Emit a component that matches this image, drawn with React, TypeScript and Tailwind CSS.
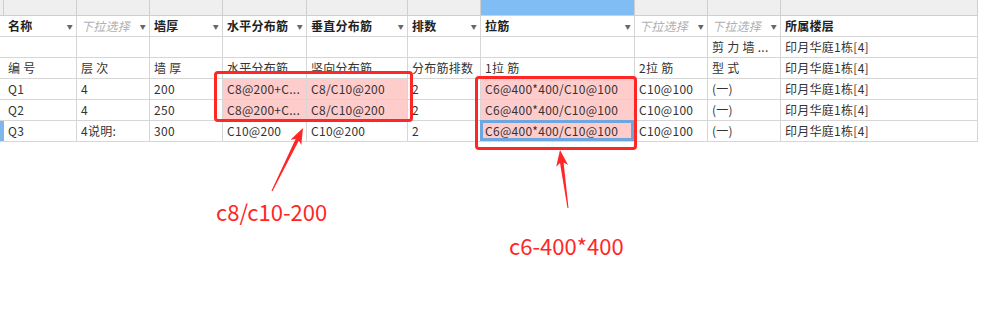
import React from "react";

const cols = "grid-cols-[4px_73px_73px_73px_84px_101px_73px_154px_73px_73px_197px]";
const font = { fontFamily: '"Noto Sans CJK SC", "Noto Sans", sans-serif' };

type Cell = { text?: string; bold?: boolean; hint?: boolean; drop?: boolean; pink?: boolean; sel?: boolean };

const header: Cell[] = [
  { text: "名称", bold: true, drop: true },
  { text: "下拉选择", hint: true, drop: true },
  { text: "墙厚", bold: true, drop: true },
  { text: "水平分布筋", bold: true, drop: true },
  { text: "垂直分布筋", bold: true, drop: true },
  { text: "排数", bold: true, drop: true },
  { text: "拉筋", bold: true, drop: true },
  { text: "下拉选择", hint: true, drop: true },
  { text: "下拉选择", hint: true, drop: true },
  { text: "所属楼层", bold: true },
];

const floor = "印月华庭1栋[4]";
const rows: Cell[][] = [
  [{}, {}, {}, {}, {}, {}, {}, {}, { text: "剪 力 墙 ..." }, { text: floor }],
  [
    { text: "编 号" }, { text: "层 次" }, { text: "墙 厚" }, { text: "水平分布筋" }, { text: "竖向分布筋" },
    { text: "分布筋排数" }, { text: "1拉 筋" }, { text: "2拉 筋" }, { text: "型 式" }, { text: floor },
  ],
  [
    { text: "Q1" }, { text: "4" }, { text: "200" }, { text: "C8@200+C...", pink: true }, { text: "C8/C10@200", pink: true },
    { text: "2" }, { text: "C6@400*400/C10@100", pink: true }, { text: "C10@100" }, { text: "(一)" }, { text: floor },
  ],
  [
    { text: "Q2" }, { text: "4" }, { text: "250" }, { text: "C8@200+C...", pink: true }, { text: "C8/C10@200", pink: true },
    { text: "2" }, { text: "C6@400*400/C10@100", pink: true }, { text: "C10@100" }, { text: "(一)" }, { text: floor },
  ],
  [
    { text: "Q3" }, { text: "4说明:" }, { text: "300" }, { text: "C10@200" }, { text: "C10@200" },
    { text: "2" }, { text: "C6@400*400/C10@100", pink: true, sel: true }, { text: "C10@100" }, { text: "(一)" }, { text: floor },
  ],
];

function GridCell({ c }: { c: Cell }) {
  return (
    <div
      className={
        "relative h-[21px] border-r border-b border-[#d6d6d6] flex items-center pl-[4px] pr-[3px] text-[12px] tracking-[0.28px] whitespace-nowrap " +
        (c.pink ? "bg-[#ffcccc] " : "bg-white ") +
        (c.bold ? "font-bold text-[#222] " : "text-[#333] ")
      }
    >
      {c.sel && <div className="absolute -left-px -top-px right-0 bottom-0 border-[3px] border-[#6ea7e0]" />}
      <span className={c.hint ? "italic text-[#b0b0b0]" : ""}>{c.text}</span>
      {c.drop && <span className="ml-auto text-[6px] text-[#666]">▼</span>}
    </div>
  );
}

export default function App() {
  return (
    <div className="relative w-[982px] h-[321px] bg-white overflow-hidden" style={font}>
      <div className={"grid w-[978px] " + cols}>
        {/* top strip */}
        <div className="h-[16px] bg-[#efefef] border-r border-b border-[#cfcfcf]" />
        {Array.from({ length: 10 }).map((_, i) => (
          <div
            key={i}
            className={"h-[16px] border-r border-b border-[#cfcfcf] " + (i === 6 ? "bg-[#80bdf5]" : "bg-[#efefef]")}
          />
        ))}
        {/* header */}
        <div className="h-[21px] border-b border-[#d6d6d6]" />
        {header.map((c, i) => (
          <GridCell key={i} c={c} />
        ))}
        {rows.map((r, ri) => (
          <React.Fragment key={ri}>
            <div className={"h-[21px] border-b border-[#d6d6d6] " + (ri === 4 ? "bg-[#7fb6ee]" : "")} />
            {r.map((c, ci) => (
              <GridCell key={ci} c={c} />
            ))}
          </React.Fragment>
        ))}
      </div>

      {/* annotation boxes */}
      <div className="absolute left-[214px] top-[71px] w-[199px] h-[51px] border-[3px] border-[#ff2626] rounded-[4px]" />
      <div className="absolute left-[475px] top-[76px] w-[162px] h-[74px] border-[3px] border-[#ff2626] rounded-[4px]" />

      <svg className="absolute left-0 top-0" width="982" height="321">
        <polygon
          fill="#ff2626"
          points="303,128 301.3,145 298.9,140.5 272.5,191.2 271.5,190.8 295.6,138.9 290.5,139.7"
        />
        <polygon
          fill="#ff2626"
          points="560,150 568.1,165 563.6,162.6 568.5,207.9 567.5,208.1 560,163.1 556.2,166.7"
        />
      </svg>

      <div className="absolute left-[216px] top-[200px] text-[22px] leading-none text-[#ff2626]">c8/c10-200</div>
      <div className="absolute left-[509px] top-[234px] text-[22px] leading-none text-[#ff2626]">c6-400*400</div>
    </div>
  );
}
